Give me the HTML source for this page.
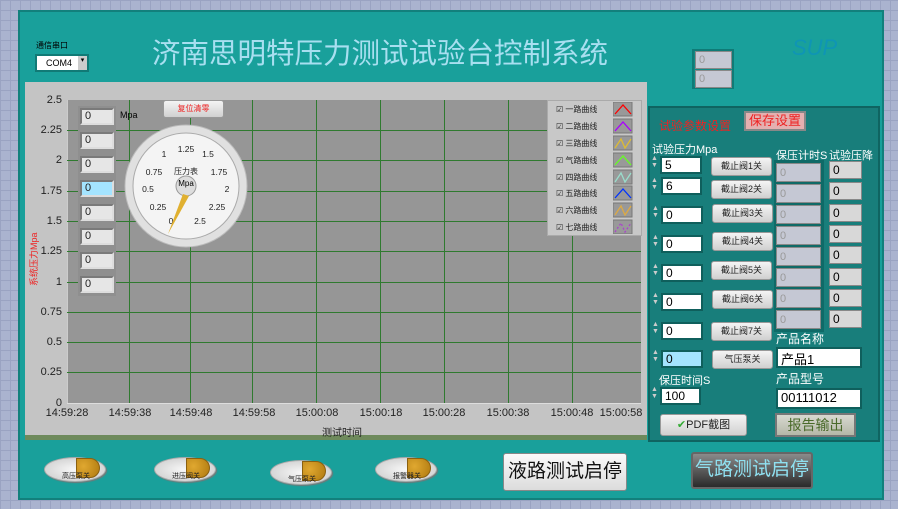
<!DOCTYPE html>
<html><head><meta charset="utf-8"><style>
*{margin:0;padding:0;box-sizing:border-box}
body{width:898px;height:509px;overflow:hidden;position:relative;font-family:"Liberation Sans","Noto Sans CJK SC",sans-serif;
background-color:#aab3cf;background-image:linear-gradient(#9aa3c2 1px,transparent 1px),linear-gradient(90deg,#9aa3c2 1px,transparent 1px);background-size:10px 10px}
.a{position:absolute}
.num{position:absolute;background:#e6e6e6;border:2px solid #7a7a7a;border-right-color:#ddd;border-bottom-color:#ddd;font-size:11px;padding-left:3px;line-height:13px;color:#222}
.btn{position:absolute;background:linear-gradient(#f4f4f4,#d0d0d0);border:1px solid #999;border-radius:3px;font-size:9px;text-align:center;color:#222}
.wn{position:absolute;background:#fff;border:2px solid #0f5f5c;font-size:12px;padding-left:3px;color:#000}
.sp{position:absolute;width:8px;height:22px;font-size:7px;color:#ccc}
.gr{position:absolute;background:#c5c8d4;border:1px solid #888;color:#999;font-size:11px;padding-left:3px}
.dr{position:absolute;background:#d8d8d8;border:1px solid #888;font-size:12px;padding-left:3px;color:#000}
.yl{position:absolute;right:836px;font-size:11px;color:#222;text-align:right}
.xl{position:absolute;top:407px;font-size:11px;color:#222;width:60px;text-align:center}
.lg{position:absolute;left:556px;font-size:8px;color:#222}
.knob{position:absolute;width:62px;height:25px;border-radius:50%;background:radial-gradient(#f8f8f8,#c8c8c8);border:1px solid #aaa;box-shadow:1px 1px 1px #777}
.knob i{position:absolute;left:31px;top:0px;width:24px;height:20px;background:radial-gradient(circle at 30% 40%,#e0a830,#b07a10);border-radius:0 12px 12px 0;border:1px solid #8a6010}
.knob b{position:absolute;left:0;width:62px;top:13px;font-size:7px;text-align:center;font-weight:normal;color:#222}
</style></head><body>
<div class="a" style="left:18px;top:10px;width:866px;height:490px;background:#19a09b;border:2px solid #12807c"></div>
<div class="a" style="left:36px;top:40px;font-size:8px;color:#000">通信串口</div>
<div class="a" style="left:35px;top:54px;width:54px;height:18px;background:#fff;border:2px solid #117a76;font-size:9px;line-height:14px;padding-left:9px">COM4</div>
<div class="a" style="left:78px;top:56px;width:9px;height:14px;background:#ccc;font-size:7px;text-align:center">▾</div>
<div class="a" style="left:152px;top:31px;font-size:28.5px;color:#a8dff0">济南思明特压力测试试验台控制系统</div>
<div class="a" style="left:792px;top:35px;font-size:22px;color:#0f95b5;font-style:italic">SUP</div>
<div class="a" style="left:692px;top:49px;width:42px;height:40px;background:#128a86;border:2px solid #0f7b77"></div>
<div class="gr" style="left:695px;top:51px;width:37px;height:18px;line-height:16px">0</div>
<div class="gr" style="left:695px;top:70px;width:37px;height:18px;line-height:16px">0</div>

<div class="a" style="left:25px;top:82px;width:622px;height:358px;background:#c4c4c4;border-bottom:5px solid #6e8a5c"></div>
<div class="a" style="left:67px;top:100px;width:574px;height:303px;background:#969696;border-left:1px solid #ccc"></div>
<svg class="a" style="left:0;top:0" width="898" height="509">
<g stroke="#2f7a2f" stroke-width="1">
<line x1="67" x2="641" y1="130.5" y2="130.5"/><line x1="67" x2="641" y1="160.5" y2="160.5"/><line x1="67" x2="641" y1="191.5" y2="191.5"/><line x1="67" x2="641" y1="221.5" y2="221.5"/><line x1="67" x2="641" y1="251.5" y2="251.5"/><line x1="67" x2="641" y1="282.5" y2="282.5"/><line x1="67" x2="641" y1="312.5" y2="312.5"/><line x1="67" x2="641" y1="342.5" y2="342.5"/><line x1="67" x2="641" y1="372.5" y2="372.5"/>
<line y1="100" y2="403" x1="129.5" x2="129.5"/><line y1="100" y2="403" x1="190.5" x2="190.5"/><line y1="100" y2="403" x1="252.5" x2="252.5"/><line y1="100" y2="403" x1="316.5" x2="316.5"/><line y1="100" y2="403" x1="380.5" x2="380.5"/><line y1="100" y2="403" x1="444.5" x2="444.5"/><line y1="100" y2="403" x1="508.5" x2="508.5"/><line y1="100" y2="403" x1="572.5" x2="572.5"/>
</g>
<line x1="67" x2="641" y1="403.5" y2="403.5" stroke="#ddd"/>
</svg>
<div class="yl" style="top:94px">2.5</div><div class="yl" style="top:124px">2.25</div><div class="yl" style="top:154px">2</div><div class="yl" style="top:185px">1.75</div><div class="yl" style="top:215px">1.5</div><div class="yl" style="top:245px">1.25</div><div class="yl" style="top:276px">1</div><div class="yl" style="top:306px">0.75</div><div class="yl" style="top:336px">0.5</div><div class="yl" style="top:366px">0.25</div><div class="yl" style="top:397px">0</div>
<div class="a" style="transform:rotate(-90deg);transform-origin:0 0;font-size:9px;color:#e22;width:80px;top:286px;left:27px">系统压力Mpa</div>
<div class="xl" style="left:37px">14:59:28</div><div class="xl" style="left:100px">14:59:38</div><div class="xl" style="left:161px">14:59:48</div><div class="xl" style="left:224px">14:59:58</div><div class="xl" style="left:287px">15:00:08</div><div class="xl" style="left:351px">15:00:18</div><div class="xl" style="left:414px">15:00:28</div><div class="xl" style="left:478px">15:00:38</div><div class="xl" style="left:542px">15:00:48</div><div class="xl" style="left:591px">15:00:58</div>
<div class="a" style="left:322px;top:424px;font-size:10px;color:#222">测试时间</div>

<div class="a" style="left:78px;top:106px;width:38px;height:190px;background:#8f8f8f"></div>
<div class="num" style="left:80px;top:108px;width:34px;height:17px">0</div>
<div class="num" style="left:80px;top:132px;width:34px;height:17px">0</div>
<div class="num" style="left:80px;top:156px;width:34px;height:17px">0</div>
<div class="num" style="left:80px;top:180px;width:34px;height:17px;background:#a4e4ff">0</div>
<div class="num" style="left:80px;top:204px;width:34px;height:17px">0</div>
<div class="num" style="left:80px;top:228px;width:34px;height:17px">0</div>
<div class="num" style="left:80px;top:252px;width:34px;height:17px">0</div>
<div class="num" style="left:80px;top:276px;width:34px;height:17px">0</div>
<div class="a" style="left:120px;top:110px;font-size:9px">Mpa</div>
<div class="btn" style="left:163px;top:100px;width:61px;height:18px;line-height:16px;color:#e22;font-size:8px">复位清零</div>

<svg class="a" style="left:124px;top:124px" width="124" height="124">
<circle cx="62" cy="62" r="61" fill="#e0e0e0" stroke="#bbb"/>
<circle cx="62" cy="62" r="53" fill="#f4f4f4" stroke="#aaa"/>
<g font-size="8.5" fill="#222" font-family="Liberation Sans" text-anchor="middle">
<text x="62" y="28">1.25</text><text x="40" y="33">1</text><text x="84" y="33">1.5</text><text x="30" y="51">0.75</text><text x="95" y="51">1.75</text><text x="24" y="68">0.5</text><text x="103" y="68">2</text><text x="34" y="86">0.25</text><text x="93" y="86">2.25</text><text x="47" y="100">0</text><text x="76" y="100">2.5</text>
<text x="62" y="50" font-size="8">压力表</text></g>
<circle cx="62" cy="62" r="10" fill="#ddd" stroke="#999"/>
<text x="62" y="62" font-size="8" text-anchor="middle" font-family="Liberation Sans">Mpa</text>
<polygon points="59,70 65,72 44,110" fill="#e0b030"/>
</svg>

<div class="a" style="left:547px;top:100px;width:95px;height:136px;background:#c8c8c8;border:1px solid #aaa"></div>
<div class="lg" style="top:104px">☑ 一路曲线</div><div class="lg" style="top:121px">☑ 二路曲线</div><div class="lg" style="top:138px">☑ 三路曲线</div><div class="lg" style="top:155px">☑ 气路曲线</div><div class="lg" style="top:172px">☑ 四路曲线</div><div class="lg" style="top:188px">☑ 五路曲线</div><div class="lg" style="top:205px">☑ 六路曲线</div><div class="lg" style="top:222px">☑ 七路曲线</div>
<svg class="a" style="left:613px;top:102px" width="20" height="132">
<g fill="#999" stroke="#777"><rect x="0" y="0" width="19" height="14"/><rect x="0" y="17" width="19" height="14"/><rect x="0" y="34" width="19" height="14"/><rect x="0" y="51" width="19" height="14"/><rect x="0" y="68" width="19" height="14"/><rect x="0" y="84" width="19" height="14"/><rect x="0" y="101" width="19" height="14"/><rect x="0" y="118" width="19" height="14"/></g>
<g fill="none" stroke-width="1.3"><polyline points="2,12 10,3 18,12" stroke="#f00"/><polyline points="2,29 10,20 18,29" stroke="#a0f"/><polyline points="2,46 8,37 12,46 18,37" stroke="#db3"/><polyline points="2,63 10,54 18,63" stroke="#6f2"/><polyline points="2,80 8,71 12,80 18,71" stroke="#9dc"/><polyline points="2,96 10,87 18,96" stroke="#03f"/><polyline points="2,113 8,104 12,113 18,104" stroke="#da4"/><polyline points="2,130 8,121 12,130 18,121" stroke="#a4c" stroke-dasharray="2,2"/></g>
</svg>

<div class="a" style="left:648px;top:106px;width:232px;height:336px;background:#187e7b;border:2px solid #0f6461"></div>
<div class="a" style="left:659px;top:117px;font-size:12px;color:#e22">试验参数设置</div>
<div class="a" style="left:744px;top:111px;width:62px;height:20px;background:#e4b0b0;border:2px solid #888;font-size:13px;color:#e22;line-height:16px;text-align:center">保存设置</div>
<div class="a" style="left:652px;top:141px;font-size:11px;color:#fff">试验压力Mpa</div>
<div class="a" style="left:776px;top:147px;font-size:11px;color:#fff">保压计时S</div>
<div class="a" style="left:829px;top:147px;font-size:11px;color:#fff">试验压降</div>

<div class="wn" style="left:660px;top:156px;width:42px;height:18px">5</div>
<div class="wn" style="left:661px;top:177px;width:41px;height:18px">6</div>
<div class="wn" style="left:661px;top:206px;width:42px;height:18px">0</div>
<div class="wn" style="left:661px;top:235px;width:42px;height:18px">0</div>
<div class="wn" style="left:661px;top:264px;width:42px;height:18px">0</div>
<div class="wn" style="left:661px;top:293px;width:42px;height:18px">0</div>
<div class="wn" style="left:661px;top:322px;width:42px;height:18px">0</div>
<div class="wn" style="left:661px;top:350px;width:42px;height:18px;background:#a4e4ff">0</div>
<div class="a" style="left:659px;top:372px;font-size:11px;color:#fff">保压时间S</div>
<div class="wn" style="left:660px;top:387px;width:41px;height:18px">100</div>
<div class="sp" style="left:651px;top:155px">▲<br>▼</div><div class="sp" style="left:651px;top:177px">▲<br>▼</div><div class="sp" style="left:652px;top:205px">▲<br>▼</div><div class="sp" style="left:652px;top:234px">▲<br>▼</div><div class="sp" style="left:652px;top:263px">▲<br>▼</div><div class="sp" style="left:652px;top:292px">▲<br>▼</div><div class="sp" style="left:652px;top:321px">▲<br>▼</div><div class="sp" style="left:652px;top:349px">▲<br>▼</div><div class="sp" style="left:651px;top:386px">▲<br>▼</div>

<div class="btn" style="left:711px;top:157px;width:61px;height:19px;line-height:17px">截止阀1关</div>
<div class="btn" style="left:711px;top:180px;width:61px;height:19px;line-height:17px">截止阀2关</div>
<div class="btn" style="left:712px;top:204px;width:61px;height:19px;line-height:17px">截止阀3关</div>
<div class="btn" style="left:712px;top:232px;width:61px;height:19px;line-height:17px">截止阀4关</div>
<div class="btn" style="left:711px;top:261px;width:61px;height:19px;line-height:17px">截止阀5关</div>
<div class="btn" style="left:712px;top:290px;width:61px;height:19px;line-height:17px">截止阀6关</div>
<div class="btn" style="left:711px;top:322px;width:61px;height:19px;line-height:17px">截止阀7关</div>
<div class="btn" style="left:712px;top:350px;width:61px;height:19px;line-height:17px">气压泵关</div>

<div class="a" style="left:774px;top:160px;width:50px;height:172px;background:#0f6a67"></div>
<div class="gr" style="left:776px;top:163px;width:45px;height:19px;line-height:18px">0</div>
<div class="gr" style="left:776px;top:184px;width:45px;height:19px;line-height:18px">0</div>
<div class="gr" style="left:776px;top:205px;width:45px;height:19px;line-height:18px">0</div>
<div class="gr" style="left:776px;top:226px;width:45px;height:19px;line-height:18px">0</div>
<div class="gr" style="left:776px;top:247px;width:45px;height:19px;line-height:18px">0</div>
<div class="gr" style="left:776px;top:268px;width:45px;height:19px;line-height:18px">0</div>
<div class="gr" style="left:776px;top:289px;width:45px;height:19px;line-height:18px">0</div>
<div class="gr" style="left:776px;top:310px;width:45px;height:19px;line-height:18px">0</div>
<div class="dr" style="left:829px;top:161px;width:33px;height:18px;line-height:16px">0</div>
<div class="dr" style="left:829px;top:182px;width:33px;height:18px;line-height:16px">0</div>
<div class="dr" style="left:829px;top:204px;width:33px;height:18px;line-height:16px">0</div>
<div class="dr" style="left:829px;top:225px;width:33px;height:18px;line-height:16px">0</div>
<div class="dr" style="left:829px;top:246px;width:33px;height:18px;line-height:16px">0</div>
<div class="dr" style="left:829px;top:268px;width:33px;height:18px;line-height:16px">0</div>
<div class="dr" style="left:829px;top:289px;width:33px;height:18px;line-height:16px">0</div>
<div class="dr" style="left:829px;top:310px;width:33px;height:18px;line-height:16px">0</div>

<div class="a" style="left:776px;top:330px;font-size:12px;color:#fff">产品名称</div>
<div class="wn" style="left:776px;top:347px;width:86px;height:21px;font-size:13px">产品1</div>
<div class="a" style="left:776px;top:370px;font-size:12px;color:#fff">产品型号</div>
<div class="wn" style="left:776px;top:388px;width:86px;height:21px;font-size:13px">00111012</div>
<div class="btn" style="left:660px;top:414px;width:87px;height:22px;line-height:20px;font-size:11px"><span style="color:#3a3">✔</span>PDF截图</div>
<div class="a" style="left:775px;top:413px;width:81px;height:24px;background:linear-gradient(#d8d8d0,#b4b8a8);border:2px solid #777;font-size:14px;color:#4a6a2a;text-align:center;line-height:20px">报告输出</div>

<div class="knob" style="left:44px;top:457px"><i></i><b>高压泵关</b></div>
<div class="knob" style="left:154px;top:457px"><i></i><b>进压阀关</b></div>
<div class="knob" style="left:270px;top:460px"><i></i><b>气压泵关</b></div>
<div class="knob" style="left:375px;top:457px"><i></i><b>报警器关</b></div>
<div class="a" style="left:503px;top:453px;width:124px;height:38px;background:linear-gradient(#fafafa,#dcdcdc);border:1px solid #888;border-radius:3px;font-size:19px;color:#111;text-align:center;line-height:36px">液路测试启停</div>
<div class="a" style="left:691px;top:452px;width:122px;height:37px;background:linear-gradient(#8a8a8a,#2a2a2a);border:2px solid #666;border-radius:3px;font-size:19px;color:#8fe0f0;text-align:center;line-height:32px">气路测试启停</div>
</body></html>
